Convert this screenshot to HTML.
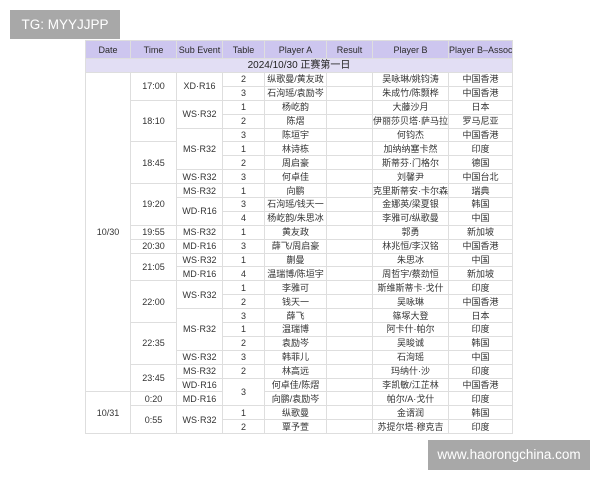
<!DOCTYPE html>
<html><head><meta charset="utf-8"><style>
html,body{margin:0;padding:0;background:#fff;width:600px;height:480px;overflow:hidden;font-family:"Liberation Sans","Noto Sans CJK SC",sans-serif;}
.tg{position:absolute;left:10px;top:10px;width:110px;height:29px;background:#a8a8a8;color:#fff;font-size:13.5px;line-height:29px;text-align:center;}
.wm{position:absolute;left:428px;top:440px;width:162px;height:30px;background:#a8a8a8;color:#fff;font-size:13.5px;line-height:30px;text-align:center;}
table{position:absolute;left:85px;top:40px;border-collapse:collapse;table-layout:fixed;width:427px;font-size:9px;color:#333;}
td,th{border:1px solid #dedede;text-align:center;padding:0;height:12.9px;line-height:12px;white-space:nowrap;overflow:hidden;}
th{background:#cdc6ef;height:17px;font-weight:normal;color:#2a2a2a;font-size:9px;}
tr.d td{background:#e2def4;height:13px;font-size:10px;color:#222;}
</style></head><body>
<div class="tg">TG: MYYJJPP</div>
<table>
<colgroup><col style="width:45px"><col style="width:46px"><col style="width:46px"><col style="width:42px"><col style="width:62px"><col style="width:46px"><col style="width:76px"><col style="width:64px"></colgroup>
<tr><th>Date</th><th>Time</th><th>Sub Event</th><th>Table</th><th>Player A</th><th>Result</th><th>Player B</th><th>Player B–Assoc</th></tr>
<tr class="d"><td colspan="8">2024/10/30 正赛第一日</td></tr>
<tr><td rowspan="23">10/30</td><td rowspan="2">17:00</td><td rowspan="2">XD·R16</td><td>2</td><td>纵歌曼/黄友政</td><td></td><td>吴咏琳/姚钧涛</td><td>中国香港</td></tr>
<tr><td>3</td><td>石洵瑶/袁励岑</td><td></td><td>朱成竹/陈颢桦</td><td>中国香港</td></tr>
<tr><td rowspan="3">18:10</td><td rowspan="2">WS·R32</td><td>1</td><td>杨屹韵</td><td></td><td>大藤沙月</td><td>日本</td></tr>
<tr><td>2</td><td>陈熠</td><td></td><td>伊丽莎贝塔·萨马拉</td><td>罗马尼亚</td></tr>
<tr><td rowspan="3">MS·R32</td><td>3</td><td>陈垣宇</td><td></td><td>何钧杰</td><td>中国香港</td></tr>
<tr><td rowspan="3">18:45</td><td>1</td><td>林诗栋</td><td></td><td>加纳纳塞卡然</td><td>印度</td></tr>
<tr><td>2</td><td>周启豪</td><td></td><td>斯蒂芬·门格尔</td><td>德国</td></tr>
<tr><td>WS·R32</td><td>3</td><td>何卓佳</td><td></td><td>刘馨尹</td><td>中国台北</td></tr>
<tr><td rowspan="3">19:20</td><td>MS·R32</td><td>1</td><td>向鹏</td><td></td><td>克里斯蒂安·卡尔森</td><td>瑞典</td></tr>
<tr><td rowspan="2">WD·R16</td><td>3</td><td>石洵瑶/钱天一</td><td></td><td>金娜英/梁夏银</td><td>韩国</td></tr>
<tr><td>4</td><td>杨屹韵/朱思冰</td><td></td><td>李雅可/纵歌曼</td><td>中国</td></tr>
<tr><td>19:55</td><td>MS·R32</td><td>1</td><td>黄友政</td><td></td><td>郭勇</td><td>新加坡</td></tr>
<tr><td>20:30</td><td>MD·R16</td><td>3</td><td>薛飞/周启豪</td><td></td><td>林兆恒/李汉铭</td><td>中国香港</td></tr>
<tr><td rowspan="2">21:05</td><td>WS·R32</td><td>1</td><td>蒯曼</td><td></td><td>朱思冰</td><td>中国</td></tr>
<tr><td>MD·R16</td><td>4</td><td>温瑞博/陈垣宇</td><td></td><td>周哲宇/蔡劲恒</td><td>新加坡</td></tr>
<tr><td rowspan="3">22:00</td><td rowspan="2">WS·R32</td><td>1</td><td>李雅可</td><td></td><td>斯维斯蒂卡·戈什</td><td>印度</td></tr>
<tr><td>2</td><td>钱天一</td><td></td><td>吴咏琳</td><td>中国香港</td></tr>
<tr><td rowspan="3">MS·R32</td><td>3</td><td>薛飞</td><td></td><td>篠塚大登</td><td>日本</td></tr>
<tr><td rowspan="3">22:35</td><td>1</td><td>温瑞博</td><td></td><td>阿卡什·帕尔</td><td>印度</td></tr>
<tr><td>2</td><td>袁励岑</td><td></td><td>吴晙诚</td><td>韩国</td></tr>
<tr><td>WS·R32</td><td>3</td><td>韩菲儿</td><td></td><td>石洵瑶</td><td>中国</td></tr>
<tr><td rowspan="2">23:45</td><td>MS·R32</td><td>2</td><td>林高远</td><td></td><td>玛纳什·沙</td><td>印度</td></tr>
<tr><td>WD·R16</td><td rowspan="2">3</td><td>何卓佳/陈熠</td><td></td><td>李凯敏/江芷林</td><td>中国香港</td></tr>
<tr><td rowspan="3">10/31</td><td>0:20</td><td>MD·R16</td><td>向鹏/袁励岑</td><td></td><td>帕尔/A·戈什</td><td>印度</td></tr>
<tr><td rowspan="2">0:55</td><td rowspan="2">WS·R32</td><td>1</td><td>纵歌曼</td><td></td><td>金谞润</td><td>韩国</td></tr>
<tr><td>2</td><td>覃予萱</td><td></td><td>苏提尔塔·穆克吉</td><td>印度</td></tr>
</table>
<div class="wm">www.haorongchina.com</div>
</body></html>
